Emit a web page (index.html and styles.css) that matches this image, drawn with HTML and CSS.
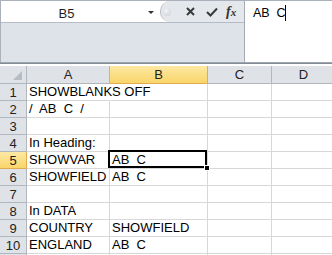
FILE: index.html
```html
<!DOCTYPE html>
<html>
<head>
  <meta charset="UTF-8">
  <title>SHOWBLANKS</title>
  <link rel="stylesheet" href="styles.css">
</head>
<body>
  <!-- Formula bar -->
  <div class="fbar">
    <div class="fbar-left">
      <div class="fbar-top">
        <div class="namebox">
          <span class="name">B5</span>
          <span class="arrow"></span>
        </div>
        <div class="fbar-btns">
          <span class="grip"></span>
          <svg class="ico-x" width="9" height="9" viewBox="0 0 9 9"><path d="M1 1L8 8M8 1L1 8" /></svg>
          <svg class="ico-ok" width="12" height="10" viewBox="0 0 12 10"><path d="M1 5L4.5 8.5L11 1.5" /></svg>
          <span class="fx">f<span class="fx-x">x</span></span>
        </div>
      </div>
    </div>
    <div class="fbar-input">AB  C<span class="caret"></span></div>
  </div>
  <div class="split"></div>

  <!-- Sheet -->
  <div class="sheet">
    <div class="hdr corner"><svg width="9" height="9" viewBox="0 0 9 9"><path d="M9 0L9 9L0 9Z" /></svg></div>
    <div class="hdr">A</div>
    <div class="hdr sel">B</div>
    <div class="hdr">C</div>
    <div class="hdr">D</div>

    <div class="rh">1</div><div class="cell spill">SHOWBLANKS OFF</div><div class="cell"></div><div class="cell"></div><div class="cell"></div>
    <div class="rh">2</div><div class="cell">/  AB  C  /</div><div class="cell"></div><div class="cell"></div><div class="cell"></div>
    <div class="rh">3</div><div class="cell"></div><div class="cell"></div><div class="cell"></div><div class="cell"></div>
    <div class="rh">4</div><div class="cell">In Heading:</div><div class="cell"></div><div class="cell"></div><div class="cell"></div>
    <div class="rh sel">5</div><div class="cell">SHOWVAR</div><div class="cell active">AB  C<span class="handle"></span></div><div class="cell"></div><div class="cell"></div>
    <div class="rh">6</div><div class="cell">SHOWFIELD</div><div class="cell">AB  C</div><div class="cell"></div><div class="cell"></div>
    <div class="rh">7</div><div class="cell"></div><div class="cell"></div><div class="cell"></div><div class="cell"></div>
    <div class="rh">8</div><div class="cell">In DATA</div><div class="cell"></div><div class="cell"></div><div class="cell"></div>
    <div class="rh">9</div><div class="cell">COUNTRY</div><div class="cell">SHOWFIELD</div><div class="cell"></div><div class="cell"></div>
    <div class="rh">10</div><div class="cell">ENGLAND</div><div class="cell">AB  C</div><div class="cell"></div><div class="cell"></div>
    <div class="rh"></div><div class="cell"></div><div class="cell"></div><div class="cell"></div><div class="cell"></div>
  </div>
</body>
</html>
```
FILE: styles.css
```css
* {
  box-sizing: border-box;
}

body {
  margin: 0;
  width: 332px;
  height: 255px;
  overflow: hidden;
  background: #fff;
  color: #000;
  font-family: "Liberation Sans", Arial, sans-serif;
  font-size: 13px;
}

/* formula bar */
.fbar {
  display: grid;
  grid-template-columns: 245px 1fr;
  height: 63px;
  border-top: 1px solid #aab1ba;
  border-bottom: 1px solid #9ea5ae;
}

.fbar-left {
  background: #dee3ea;
  border-left: 1px solid #aab1ba;
  border-right: 1px solid #a4abb5;
}

.fbar-top {
  display: flex;
  height: 22px;
  background: #fff;
  border-bottom: 1px solid #b6bcc5;
}

.namebox {
  width: 159px;
  display: flex;
  align-items: center;
  padding-top: 3px;
}

.name {
  flex: 1;
  text-align: center;
  padding-right: 16px;
  color: #1e1e1e;
}

.arrow {
  width: 0;
  height: 0;
  margin: 0 6px 2px 0;
  border-left: 3px solid transparent;
  border-right: 3px solid transparent;
  border-top: 3px solid #333;
}

.fbar-btns {
  flex: 1;
  display: flex;
  align-items: center;
  background: #e4e7ec;
  border-left: 1px solid #b9bec6;
  border-radius: 10px 0 0 10px;
}

.grip {
  width: 8px;
  height: 8px;
  margin-left: 2px;
  border-radius: 50%;
  background: radial-gradient(circle at 40% 35%, #f4f5f7, #c9ccd1);
}

.ico-x {
  margin-left: 15px;
}

.ico-x path,
.ico-ok path {
  fill: none;
  stroke: #3a3a3a;
  stroke-width: 2;
}

.ico-ok {
  margin-left: 11px;
}

.fx {
  margin-left: 8px;
  font-family: "Liberation Serif", serif;
  font-style: italic;
  font-weight: bold;
  font-size: 14px;
  color: #333;
}

.fx-x {
  font-size: 11px;
}

.fbar-input {
  background: #fff;
  padding: 3px 0 0 8px;
  font-size: 12.5px;
  line-height: 18px;
  white-space: pre;
}

.caret {
  display: inline-block;
  width: 1px;
  height: 16px;
  margin-left: -1px;
  vertical-align: -4px;
  background: #000;
}

.split {
  height: 3px;
  border-top: 1px solid #838b95;
}

/* sheet */
.sheet {
  display: grid;
  grid-template-columns: 27px 83px 98px 64px 64px;
  grid-template-rows: 18px;
  grid-auto-rows: 17px;
}

.hdr,
.rh {
  background: #dfe3e8;
  border-right: 1px solid #b1b7bf;
  border-bottom: 1px solid #b1b7bf;
  text-align: center;
  color: #222;
  line-height: 17px;
}

.hdr.sel,
.rh.sel {
  background: linear-gradient(#fde9a4, #f9d56a);
  border-color: #e0ad4e;
}

.corner {
  display: flex;
  align-items: flex-end;
  justify-content: flex-end;
  padding: 0 4px 3px 0;
}

.corner path {
  fill: #b7bcc3;
}

.cell {
  position: relative;
  border-right: 1px solid #d8d8d8;
  border-bottom: 1px solid #d8d8d8;
  padding-left: 2px;
  line-height: 16px;
  white-space: pre;
}

.cell.spill {
  border-right-color: transparent;
}

.cell.active::after {
  content: "";
  position: absolute;
  left: -2px;
  top: -2px;
  right: 0;
  bottom: 0;
  border: 2px solid #000;
}

.handle {
  position: absolute;
  right: -3px;
  bottom: -3px;
  width: 6px;
  height: 6px;
  background: #000;
  border: 1px solid #fff;
  z-index: 1;
}
```
